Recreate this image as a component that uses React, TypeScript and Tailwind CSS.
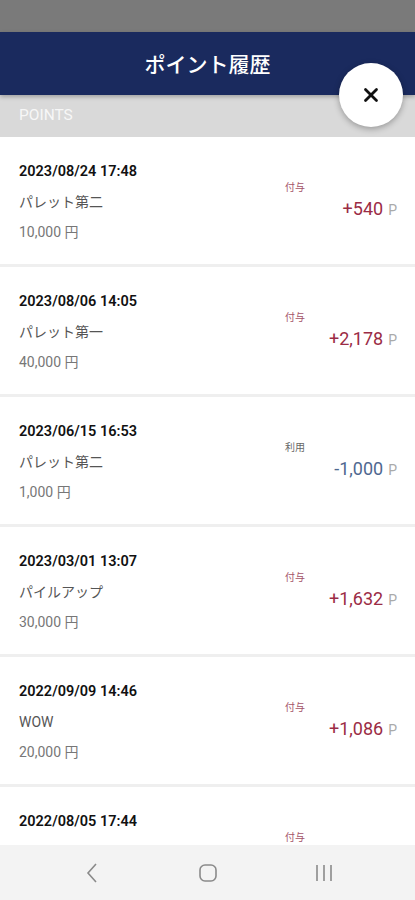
import { X } from 'lucide-react';

type Entry = {
  date: string;
  name: string;
  yen: string;
  kind: 'grant' | 'use';
  points: string;
};

const entries: Entry[] = [
  { date: '2023/08/24 17:48', name: 'パレット第二', yen: '10,000 円', kind: 'grant', points: '+540' },
  { date: '2023/08/06 14:05', name: 'パレット第一', yen: '40,000 円', kind: 'grant', points: '+2,178' },
  { date: '2023/06/15 16:53', name: 'パレット第二', yen: '1,000 円', kind: 'use', points: '-1,000' },
  { date: '2023/03/01 13:07', name: 'パイルアップ', yen: '30,000 円', kind: 'grant', points: '+1,632' },
  { date: '2022/09/09 14:46', name: 'WOW', yen: '20,000 円', kind: 'grant', points: '+1,086' },
  { date: '2022/08/05 17:44', name: 'パレット第一', yen: '10,000 円', kind: 'grant', points: '+540' },
];

// one history row
const Row = ({ e }: { e: Entry }) => {
  const grant = e.kind === 'grant';
  return (
    <div className="flex h-[127px] shrink-0 bg-white pl-[19px] pr-[18px] pt-[20px]">
      <div className="flex-1">
        <p className="text-[14.5px] font-semibold leading-[30px] text-[#111]">{e.date}</p>
        <p className="text-[14px] leading-[30px] text-[#555]">{e.name}</p>
        <p className="text-[14px] leading-[30px] text-[#777]">{e.yen}</p>
      </div>
      <div className="w-[112px] pt-[24px]">
        <p className={`text-[10px] leading-[14px] ${grant ? 'text-[#a4546a]' : 'text-[#666]'}`}>
          {grant ? '付与' : '利用'}
        </p>
        <p className="mt-[3px] text-right leading-[22px]">
          <span className={`text-[18px] ${grant ? 'text-[#9b2c45]' : 'text-[#4f6890]'}`}>{e.points}</span>
          <span className="ml-[5px] text-[14px] text-[#aaa]">P</span>
        </p>
      </div>
    </div>
  );
};

export default function App() {
  return (
    <div
      className="relative flex h-[900px] w-[415px] flex-col overflow-hidden bg-[#efefef]"
      style={{ fontFamily: "Roboto, 'Noto Sans CJK JP', sans-serif" }}
    >
      <div className="h-[32px] shrink-0 bg-[#7a7a7a]" />
      <header className="z-10 flex h-[63px] shrink-0 items-center justify-center bg-[#1a2a5e] pt-[4px] shadow-[0_2px_4px_rgba(0,0,0,0.25)]">
        <h1 className="text-[21px] font-medium text-white">ポイント履歴</h1>
      </header>
      <div className="flex h-[42px] shrink-0 items-center bg-[#d9d9d9] px-[19px]">
        <span className="text-[15.5px] text-[#f7f7f7]">POINTS</span>
      </div>

      <div className="flex min-h-0 flex-1 flex-col gap-[3px] overflow-hidden">
        {entries.map((e, i) => (
          <Row key={i} e={e} />
        ))}
      </div>

      <nav className="flex h-[55px] shrink-0 items-center justify-center bg-[#f3f3f3] text-[#8a8a8a]">
        <div className="flex w-[116px] justify-center">
          <svg width="14" height="22" viewBox="0 0 14 22" fill="none" stroke="currentColor" strokeWidth="1.6">
            <path d="M11 2 L3 11 L11 20" />
          </svg>
        </div>
        <div className="flex w-[116px] justify-center">
          <svg width="20" height="20" viewBox="0 0 20 20" fill="none" stroke="currentColor" strokeWidth="1.6">
            <rect x="2" y="2" width="16" height="16" rx="5" />
          </svg>
        </div>
        <div className="flex w-[116px] justify-center">
          <svg width="20" height="20" viewBox="0 0 20 20" fill="none" stroke="currentColor" strokeWidth="1.6">
            <path d="M3 2v16M10 2v16M17 2v16" />
          </svg>
        </div>
      </nav>

      <button className="absolute right-[12px] top-[63px] z-20 flex h-[64px] w-[64px] items-center justify-center rounded-full bg-white shadow-[0_2px_6px_rgba(0,0,0,0.3)]">
        <X size={22} strokeWidth={3} className="text-[#111]" />
      </button>
    </div>
  );
}
